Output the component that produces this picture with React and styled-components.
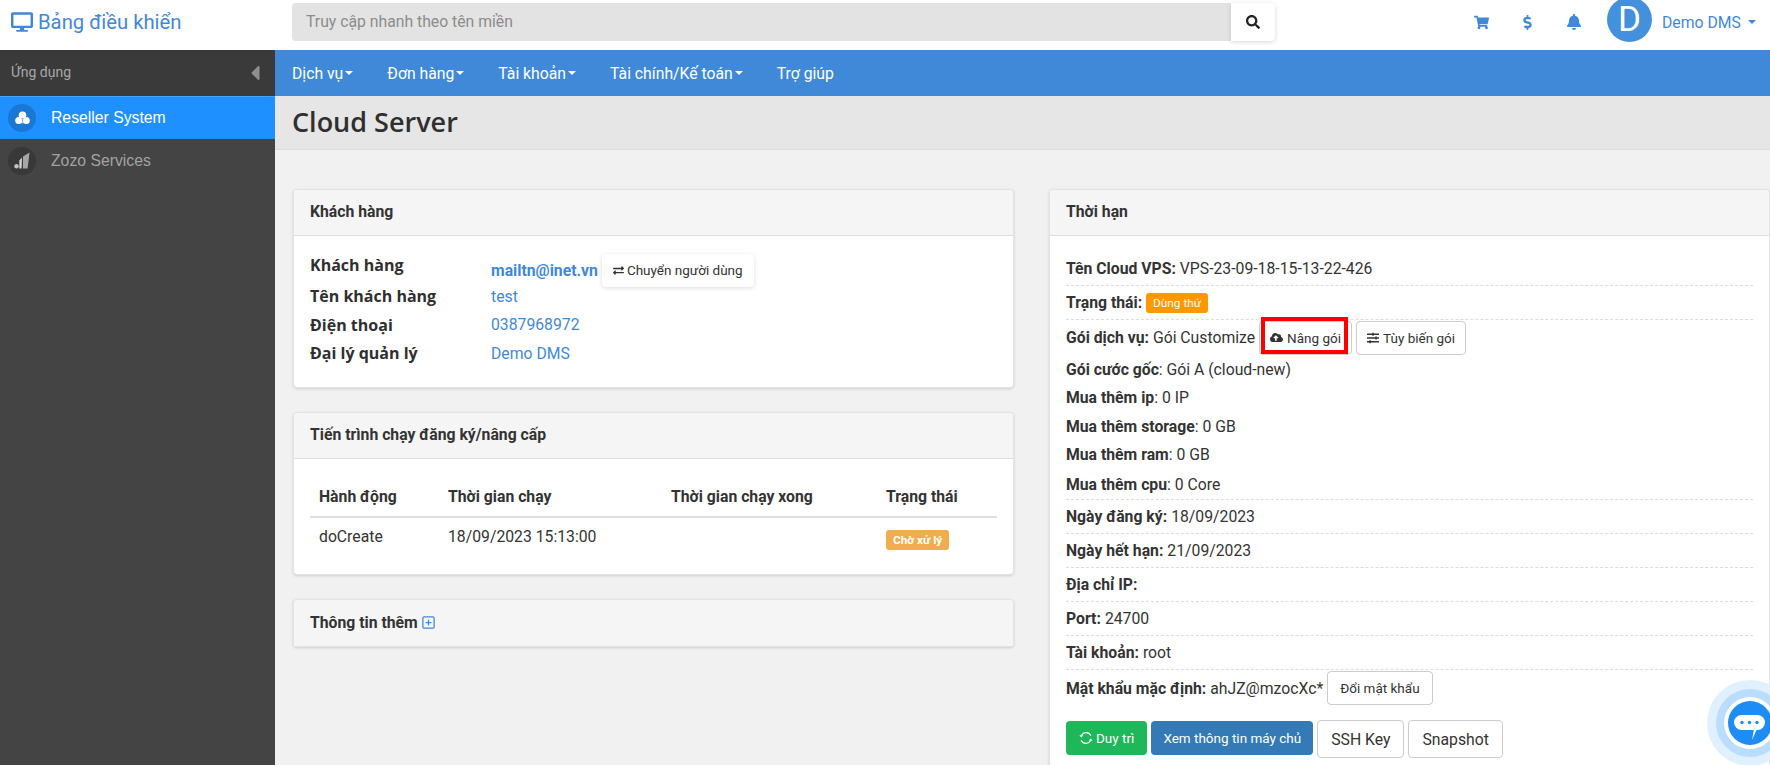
import styled, { createGlobalStyle } from "styled-components";
import { FaDesktop, FaSearch, FaShoppingCart, FaDollarSign, FaBell, FaExchangeAlt, FaCloudUploadAlt, FaSlidersH, FaCaretLeft } from "react-icons/fa";
import { FiPlusSquare } from "react-icons/fi";

const GlobalStyle = createGlobalStyle`
  html, body { margin: 0; padding: 0; height: 765px; overflow: hidden; background: #f1f1f1; }
  * { box-sizing: border-box; }
  body { font-family: Roboto, "Liberation Sans", sans-serif; font-size: 15.75px; color: #333; }
`;

const Page = styled.div`
  width: 1770px;
  height: 765px;
  overflow: hidden;
  position: relative;
`;

const TopBar = styled.header`
  height: 50px;
  background: #fff;
  display: flex;
  align-items: flex-start;
  overflow: hidden;
`;

const Brand = styled.div`
  width: 292px;
  height: 44px;
  padding-left: 11px;
  display: flex;
  align-items: center;
  gap: 5px;
  color: #3f89d8;
  font-size: 20.25px;
`;

const Search = styled.div`
  width: 983px;
  height: 38px;
  margin-top: 3px;
  display: flex;
`;

const SearchInput = styled.div`
  flex: 1;
  background: #e3e3e3;
  border-radius: 4px 0 0 4px;
  color: #8c8c8c;
  font-size: 15.75px;
  padding-left: 14px;
  line-height: 38px;
`;

const SearchButton = styled.div`
  width: 44px;
  background: #fff;
  border-radius: 0 4px 4px 0;
  box-shadow: 0 1px 4px rgba(0, 0, 0, 0.16);
  display: flex;
  align-items: center;
  justify-content: center;
  color: #222;
  font-size: 14px;
`;

const TopIcons = styled.div`
  margin-left: 199px;
  width: 118px;
  height: 44px;
  display: flex;
  align-items: center;
  gap: 31px;
  color: #3f89d8;
  font-size: 15px;
`;

const Avatar = styled.div`
  width: 45px;
  height: 45px;
  margin-top: -3px;
  margin-left: 15px;
  border-radius: 50%;
  background: #4390dc;
  color: #fff;
  font-size: 35px;
  line-height: 45px;
  text-align: center;
  flex: none;
`;

const UserName = styled.div`
  margin-left: 10px;
  height: 44px;
  display: flex;
  align-items: center;
  gap: 7px;
  color: #3f89d8;
  font-size: 15.75px;
  white-space: nowrap;
`;

const Caret = styled.span`
  display: inline-block;
  border-top: 4px solid currentColor;
  border-left: 4px solid transparent;
  border-right: 4px solid transparent;
  margin-left: ${(p) => p.$gap || 0}px;
`;

const Body = styled.div`
  display: flex;
  height: 715px;
`;

const Sidebar = styled.aside`
  width: 275px;
  flex: none;
  background: #444;
`;

const SideHead = styled.div`
  height: 46px;
  background: #3a3a3a;
  color: #a8a8a8;
  font-size: 14px;
  padding: 0 8px 2px 11px;
  display: flex;
  align-items: center;
  justify-content: space-between;
  svg { font-size: 24px; color: #8f8f8f; margin-top: 2px; }
`;

const SideItem = styled.div`
  height: 43px;
  display: flex;
  align-items: center;
  gap: 15px;
  padding-left: 8px;
  font-family: "Liberation Sans", Arial, sans-serif;
  font-size: 15.75px;
  background: ${(p) => (p.$active ? "#1e90ff" : "transparent")};
  color: ${(p) => (p.$active ? "#fff" : "#a3a3a3")};
  border-top: ${(p) => (p.$active ? "1px solid #45a5f5" : "none")};
`;

const SideIcon = styled.span`
  width: 28px;
  height: 28px;
  border-radius: 50%;
  background: ${(p) => (p.$active ? "#1a78d4" : "#383838")};
  display: flex;
  align-items: center;
  justify-content: center;
  flex: none;
`;

const Main = styled.main`
  flex: 1;
  min-width: 0;
  overflow: hidden;
`;

const Nav = styled.nav`
  height: 46px;
  background: #3f89d8;
  display: flex;
  align-items: center;
  padding-left: 17px;
  gap: 34px;
  color: #fff;
  font-size: 15.75px;
`;

const NavItem = styled.div`
  display: flex;
  align-items: center;
  white-space: nowrap;
`;

const TitleBand = styled.div`
  height: 54px;
  background: #e6e6e6;
  border-bottom: 1px solid #ddd;
  padding-left: 17px;
  display: flex;
  align-items: center;
`;

const Title = styled.h1`
  margin: -2px 0 0;
  font-family: "Open Sans", sans-serif;
  font-weight: 600;
  font-size: 27px;
  color: #2f2f2f;
`;

const Content = styled.div`
  display: grid;
  grid-template-columns: 721px 721px;
  gap: 35px;
  padding: 39px 0 0 18px;
  align-items: start;
`;

const Column = styled.div`
  display: flex;
  flex-direction: column;
  gap: 24px;
`;

const Card = styled.section`
  background: #fff;
  border-radius: 4px;
  border: 1px solid #e3e3e3;
  box-shadow: 0 1px 3px rgba(0, 0, 0, 0.14);
`;

const CardHead = styled.div`
  height: 46px;
  background: #f5f5f5;
  border-bottom: ${(p) => (p.$last ? "none" : "1px solid #ddd")};
  border-radius: 4px 4px 0 0;
  padding: 0 0 2px 16px;
  display: flex;
  align-items: center;
  gap: 3px;
  font-weight: 700;
  font-size: 15.75px;
  color: #333;
  svg { color: #3f89d8; font-size: 15px; }
`;

const InfoBody = styled.div`
  padding: 17.5px 16px 19.5px;
`;

const InfoRow = styled.div`
  display: grid;
  grid-template-columns: 181px 1fr;
  height: 28.5px;
  align-items: center;
`;

const InfoLabel = styled.div`
  font-family: "Open Sans", sans-serif;
  font-weight: 700;
  font-size: 16px;
  color: #2f2f2f;
  margin-top: ${(p) => (p.$up ? "-10px" : "0")};
`;

const InfoValue = styled.div`
  display: flex;
  align-items: center;
  gap: 4px;
  color: #3f89d8;
  font-size: 15.75px;
  font-weight: ${(p) => (p.$bold ? 700 : 400)};
`;

const ShadowButton = styled.span`
  height: 33px;
  padding: 0 11px;
  background: #fff;
  border-radius: 4px;
  box-shadow: 0 1px 4px rgba(0, 0, 0, 0.14);
  color: #333;
  font-size: 13.5px;
  font-weight: 400;
  display: inline-flex;
  align-items: center;
  gap: 3px;
`;

const TableWrap = styled.div`
  padding: 20px 16px 17px;
`;

const Table = styled.table`
  width: 100%;
  border-collapse: collapse;
  table-layout: fixed;
  font-size: 15.75px;
`;

const Th = styled.th`
  text-align: left;
  font-weight: 700;
  font-size: 15.75px;
  height: 38px;
  padding: 0 0 3px 9px;
  border-bottom: 2px solid #ddd;
  color: #333;
  width: ${(p) => p.$w || "auto"};
`;

const Td = styled.td`
  height: 40px;
  padding: 0 0 2px 9px;
  color: #333;
`;

const Badge = styled.span`
  display: inline-block;
  font-size: 11.8px;
  font-weight: ${(p) => (p.$bold ? 700 : 400)};
  padding: 0 7px;
  line-height: 20px;
  height: 20px;
  color: #fff;
  border-radius: 3px;
  background: ${(p) => p.$bg};
`;

const StatusBadge = styled(Badge)`
  margin-top: 6px;
`;

const DetailBody = styled.div`
  padding: 16px 16px 40px;
`;

const DetailRow = styled.div`
  min-height: ${(p) => p.$h || 34}px;
  display: flex;
  align-items: center;
  gap: 4px;
  white-space: nowrap;
  font-size: 15.75px;
  color: #333;
  border-bottom: ${(p) => (p.$dashed ? "1px dashed #ddd" : "none")};
  b { font-weight: 700; }
`;

const OutlineButton = styled.span`
  position: relative;
  height: 34px;
  padding: 0 ${(p) => p.$pad || 10}px;
  border: 1px solid #ccc;
  border-radius: 4px;
  background: #fff;
  font-size: 13.5px;
  color: #333;
  display: inline-flex;
  align-items: center;
  gap: 4px;
`;

const RedFrame = styled.span`
  position: absolute;
  top: -5px;
  left: 1px;
  right: 3px;
  bottom: 0;
  border: 4px solid #f00;
`;

const Actions = styled.div`
  display: flex;
  gap: 4px;
  margin-top: 14px;
  align-items: flex-start;
`;

const SolidButton = styled.span`
  height: 34px;
  margin-top: 1px;
  padding: 0 ${(p) => p.$pad || 13}px;
  border-radius: 4px;
  background: ${(p) => p.$bg};
  color: #fff;
  font-size: 13.5px;
  display: inline-flex;
  align-items: center;
  gap: 3px;
`;

const LargeButton = styled.span`
  height: 38px;
  padding: 0 13px;
  border: 1px solid #ccc;
  border-radius: 4px;
  background: #fff;
  font-size: 15.75px;
  color: #333;
  display: inline-flex;
  align-items: center;
`;

const ChatWidget = styled.div`
  position: absolute;
  left: 1707px;
  top: 680px;
  width: 86px;
  height: 86px;
  border-radius: 50%;
  background: #e1f0ff;
  display: flex;
  align-items: center;
  justify-content: center;
`;

const ChatRing = styled.div`
  width: 68px;
  height: 68px;
  border-radius: 50%;
  background: #b9dcff;
  display: flex;
  align-items: center;
  justify-content: center;
`;

const ChatCore = styled.div`
  width: 52px;
  height: 52px;
  border-radius: 50%;
  background: #fff;
  display: flex;
  align-items: center;
  justify-content: center;
`;

const customerRows = [
  ["Tên khách hàng", "test"],
  ["Điện thoại", "0387968972"],
  ["Đại lý quản lý", "Demo DMS"],
];

const extraRows = [
  ["Gói cước gốc", "Gói A (cloud-new)"],
  ["Mua thêm ip", "0 IP"],
  ["Mua thêm storage", "0 GB"],
  ["Mua thêm ram", "0 GB"],
  ["Mua thêm cpu", "0 Core"],
];

const ResellerIcon = () => (
  <svg width="15" height="14" viewBox="0 0 15 14">
    <circle cx="7.5" cy="4.2" r="3.8" fill="#fff" />
    <circle cx="3.8" cy="9.5" r="3.6" fill="#fff" />
    <circle cx="11.2" cy="9.5" r="3.6" fill="#fff" />
    <path d="M7.5 6.5v6.5M5.6 7.4l1.9.9 1.9-.9" stroke="#7db8f0" strokeWidth="0.8" fill="none" />
  </svg>
);

const ZozoIcon = () => (
  <svg width="16" height="17" viewBox="0 0 16 17">
    <circle cx="2.5" cy="14.3" r="2.2" fill="#c4c4c4" />
    <path d="M5.3 8.5 8 5.5 7.6 16.5H5.3z" fill="#d0d0d0" />
    <path d="M9 4.5 15.5 .5 13.6 16.5H9z" fill="#a6a6a6" />
  </svg>
);

const SyncIcon = () => (
  <svg width="14" height="14" viewBox="0 0 14 14" fill="none" stroke="#fff" strokeWidth="1.2">
    <path d="M2.4 4.2A5.4 5.4 0 0 1 11.9 4.8" />
    <path d="M11.6 9.8A5.4 5.4 0 0 1 2.1 9.2" />
    <path d="M.3 4.2h4L2.4 6.6zM13.7 9.8h-4l1.9-2.4z" fill="#fff" stroke="none" />
  </svg>
);

const ChatIcon = () => (
  <svg width="44" height="44" viewBox="0 0 44 44">
    <circle cx="22" cy="22" r="22" fill="#1e8cf5" />
    <rect x="6" y="14" width="31" height="15" rx="7.5" fill="#fff" />
    <path d="M26 28l-2 11 5-11z" fill="#fff" />
    <circle cx="14" cy="21.5" r="1.7" fill="#1e8cf5" />
    <circle cx="21.5" cy="21.5" r="1.7" fill="#1e8cf5" />
    <circle cx="29" cy="21.5" r="1.7" fill="#1e8cf5" />
  </svg>
);

export default function App() {
  return (
    <Page>
      <GlobalStyle />
      <TopBar>
        <Brand>
          <FaDesktop size={22} />
          Bảng điều khiển
        </Brand>
        <Search>
          <SearchInput>Truy cập nhanh theo tên miền</SearchInput>
          <SearchButton>
            <FaSearch />
          </SearchButton>
        </Search>
        <TopIcons>
          <FaShoppingCart />
          <FaDollarSign />
          <FaBell size={16} />
        </TopIcons>
        <Avatar>D</Avatar>
        <UserName>
          Demo DMS
          <Caret />
        </UserName>
      </TopBar>
      <Body>
        <Sidebar>
          <SideHead>
            Ứng dụng
            <FaCaretLeft />
          </SideHead>
          <SideItem $active>
            <SideIcon $active>
              <ResellerIcon />
            </SideIcon>
            Reseller System
          </SideItem>
          <SideItem>
            <SideIcon>
              <ZozoIcon />
            </SideIcon>
            Zozo Services
          </SideItem>
        </Sidebar>
        <Main>
          <Nav>
            <NavItem>Dịch vụ<Caret $gap={2} /></NavItem>
            <NavItem>Đơn hàng<Caret $gap={2} /></NavItem>
            <NavItem>Tài khoản<Caret $gap={2} /></NavItem>
            <NavItem>Tài chính/Kế toán<Caret $gap={2} /></NavItem>
            <NavItem>Trợ giúp</NavItem>
          </Nav>
          <TitleBand>
            <Title>Cloud Server</Title>
          </TitleBand>
          <Content>
            <Column>
              <Card>
                <CardHead>Khách hàng</CardHead>
                <InfoBody>
                  <InfoRow>
                    <InfoLabel $up>Khách hàng</InfoLabel>
                    <InfoValue $bold>
                      mailtn@inet.vn
                      <ShadowButton>
                        <FaExchangeAlt size={11} />
                        Chuyển người dùng
                      </ShadowButton>
                    </InfoValue>
                  </InfoRow>
                  {customerRows.map(([label, value]) => (
                    <InfoRow key={label}>
                      <InfoLabel>{label}</InfoLabel>
                      <InfoValue>{value}</InfoValue>
                    </InfoRow>
                  ))}
                </InfoBody>
              </Card>
              <Card>
                <CardHead>Tiến trình chạy đăng ký/nâng cấp</CardHead>
                <TableWrap>
                  <Table>
                    <thead>
                      <tr>
                        <Th $w="129px">Hành động</Th>
                        <Th $w="223px">Thời gian chạy</Th>
                        <Th $w="215px">Thời gian chạy xong</Th>
                        <Th>Trạng thái</Th>
                      </tr>
                    </thead>
                    <tbody>
                      <tr>
                        <Td>doCreate</Td>
                        <Td>18/09/2023 15:13:00</Td>
                        <Td />
                        <Td>
                          <StatusBadge $bg="#f0ad4e" $bold>Chờ xử lý</StatusBadge>
                        </Td>
                      </tr>
                    </tbody>
                  </Table>
                </TableWrap>
              </Card>
              <Card>
                <CardHead $last>
                  Thông tin thêm
                  <FiPlusSquare />
                </CardHead>
              </Card>
            </Column>
            <Card>
              <CardHead>Thời hạn</CardHead>
              <DetailBody>
                <DetailRow $dashed>
                  <b>Tên Cloud VPS:</b> VPS-23-09-18-15-13-22-426
                </DetailRow>
                <DetailRow $dashed>
                  <b>Trạng thái:</b>
                  <Badge $bg="#ff9800">Dùng thử</Badge>
                </DetailRow>
                <DetailRow $h={35}>
                  <b>Gói dịch vụ:</b> Gói Customize
                  <OutlineButton>
                    <FaCloudUploadAlt size={13} />
                    Nâng gói
                    <RedFrame />
                  </OutlineButton>
                  <OutlineButton>
                    <FaSlidersH size={12} />
                    Tùy biến gói
                  </OutlineButton>
                </DetailRow>
                {extraRows.map(([label, value], i) => (
                  <DetailRow key={label} $h={i === 4 ? 31 : 28.5} $dashed={i === 4}>
                    <span>
                      <b>{label}</b>: {value}
                    </span>
                  </DetailRow>
                ))}
                <DetailRow $dashed>
                  <b>Ngày đăng ký:</b> 18/09/2023
                </DetailRow>
                <DetailRow $dashed>
                  <b>Ngày hết hạn:</b> 21/09/2023
                </DetailRow>
                <DetailRow $dashed>
                  <b>Địa chỉ IP:</b>
                </DetailRow>
                <DetailRow $dashed>
                  <b>Port:</b> 24700
                </DetailRow>
                <DetailRow $dashed>
                  <b>Tài khoản:</b> root
                </DetailRow>
                <DetailRow $h={36}>
                  <b>Mật khẩu mặc định:</b> ahJZ@mzocXc*
                  <OutlineButton $pad={12}>Đổi mật khẩu</OutlineButton>
                </DetailRow>
                <Actions>
                  <SolidButton $bg="#1eb75a">
                    <SyncIcon />
                    Duy trì
                  </SolidButton>
                  <SolidButton $bg="#337ab7" $pad={12}>Xem thông tin máy chủ</SolidButton>
                  <LargeButton>SSH Key</LargeButton>
                  <LargeButton>Snapshot</LargeButton>
                </Actions>
              </DetailBody>
            </Card>
          </Content>
        </Main>
      </Body>
      <ChatWidget>
        <ChatRing>
          <ChatCore>
            <ChatIcon />
          </ChatCore>
        </ChatRing>
      </ChatWidget>
    </Page>
  );
}
